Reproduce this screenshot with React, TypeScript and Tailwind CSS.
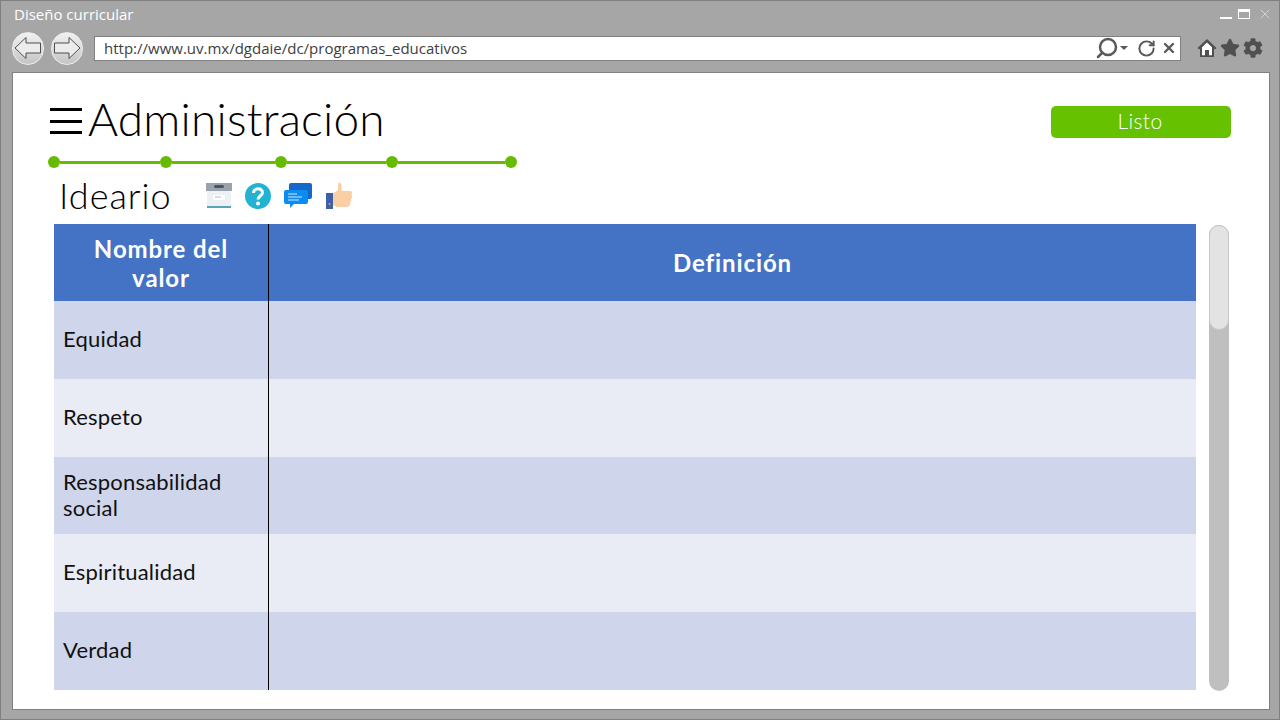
import { Search, RotateCw, X, Star } from 'lucide-react';
import { FaCog } from 'react-icons/fa';

const rows = [
  { name: ['Equidad'], height: 'h-[78px]', bg: 'bg-[#cfd5ea]' },
  { name: ['Respeto'], height: 'h-[78px]', bg: 'bg-[#e9ebf5]' },
  { name: ['Responsabilidad', 'social'], height: 'h-[77px]', bg: 'bg-[#cfd5ea]' },
  { name: ['Espiritualidad'], height: 'h-[78px]', bg: 'bg-[#e9ebf5]' },
  { name: ['Verdad'], height: 'h-[78px]', bg: 'bg-[#cfd5ea]' },
];

function NavButton({ direction }: { direction: 'left' | 'right' }) {
  return (
    <div className="flex h-[33px] w-[32px] items-center justify-center rounded-full border border-[#eeeeee] bg-gradient-to-b from-[#f2f2f2] to-[#c4c4c4]">
      <svg width="28" height="24" viewBox="0 0 28 24" fill="none" stroke="#4f4f4f" strokeWidth="1">
        {direction === 'left' ? (
          <path d="M1 12 L12 1.5 V7 H26.5 V17 H12 V22.5 Z" fill="#ececec" />
        ) : (
          <path d="M27 12 L16 1.5 V7 H1.5 V17 H16 V22.5 Z" fill="#ececec" />
        )}
      </svg>
    </div>
  );
}

function StepDot() {
  return <div className="h-[12px] w-[12px] shrink-0 rounded-full bg-[#66bb00]" />;
}

function StepLine({ width }: { width: string }) {
  return <div className={`h-[3px] bg-[#66bb00] ${width}`} />;
}

function HomeIcon() {
  return (
    <svg width="20" height="20" viewBox="0 0 20 20">
      <path d="M10 1 L19.5 10 L18 11.5 L17 10.6 V19 H3 V10.6 L2 11.5 L0.5 10 Z" fill="#505050" />
      <path d="M10 4.5 L15 9.2 V17.2 H12 V12 H8 V17.2 H5 V9.2 Z" fill="#ffffff" />
    </svg>
  );
}

function ArchiveIcon() {
  return (
    <svg width="28" height="28" viewBox="0 0 28 28">
      <rect x="1" y="1" width="26" height="8" fill="#9aa3ad" />
      <rect x="9" y="3" width="10" height="3" rx="1.5" fill="#4b5560" />
      <rect x="2" y="9" width="24" height="15" fill="#eef1f3" />
      <rect x="8" y="13" width="12" height="5" fill="#ffffff" />
      <path d="M10 15h6" stroke="#b0b8bf" strokeWidth="1" />
      <rect x="2" y="24" width="24" height="2" fill="#5ba6b5" />
    </svg>
  );
}

function HelpIcon() {
  return (
    <svg width="28" height="28" viewBox="0 0 28 28">
      <circle cx="14" cy="14" r="13" fill="#22b3d3" />
      <path d="M9.5 11 C9.5 5.5 18.5 5.5 18.5 10.5 C18.5 14 14 14 14 17.5" fill="none" stroke="#ffffff" strokeWidth="3" />
      <circle cx="14" cy="21.5" r="2" fill="#ffffff" />
    </svg>
  );
}

function ChatIcon() {
  return (
    <svg width="28" height="28" viewBox="0 0 28 28">
      <rect x="5" y="1" width="23" height="16" rx="2" fill="#1667c9" />
      <path d="M2 8h20a2 2 0 0 1 2 2v10a2 2 0 0 1-2 2H10l-4 4v-4H2a2 2 0 0 1-2-2V10a2 2 0 0 1 2-2z" fill="#0a8cf0" />
      <path d="M4 12h9M4 15h14M4 18h11" stroke="#cfe8ff" strokeWidth="1" />
    </svg>
  );
}

function ThumbIcon() {
  return (
    <svg width="28" height="28" viewBox="0 0 28 28">
      <rect x="1" y="11" width="7" height="16" fill="#3f5fa8" />
      <circle cx="4.5" cy="22" r="1" fill="#d9a441" />
      <path d="M8 12 L13 8 V2 C13 0.5 16.5 0.5 16.5 3 V9 H25 C27.5 9 27.5 12 26.5 13 C27.5 14.5 27 16 26 17 C26.5 18.5 26 20 25 20.5 C25.5 22.5 24.5 25 22 25 H12 L8 23 Z" fill="#f9cfa3" />
    </svg>
  );
}

export default function App() {
  return (
    <div className="flex h-[720px] w-[1280px] flex-col border border-[#808080] bg-[#a6a6a6] font-['Open_Sans',sans-serif]">
      {/* Title bar */}
      <div className="flex h-[26px] items-center justify-between pl-[13px] pr-[6px]">
        <span className="text-[15px] text-white">Diseño curricular</span>
        <div className="flex items-center gap-[6px]">
          <div className="mt-[8px] h-[2px] w-[12px] bg-white" />
          <div className="mr-[1px] h-[10px] w-[12px] border border-t-[3px] border-white" />
          <X className="h-[16px] w-[16px] text-[#dddddd]" strokeWidth={1.25} />
        </div>
      </div>

      {/* Toolbar */}
      <div className="flex h-[45px] items-center pb-[3px] pl-[11px] pr-[14px]">
        <div className="flex gap-[7px]">
          <NavButton direction="left" />
          <NavButton direction="right" />
        </div>
        <div className="ml-[11px] flex h-[25px] w-[1087px] items-center justify-between border border-[#808080] bg-white pl-[9px] pr-[3px]">
          <span className="text-[15px] text-[#404040]">http://www.uv.mx/dgdaie/dc/programas_educativos</span>
          <div className="flex items-center text-[#595959]">
            <Search className="h-[24px] w-[24px] -scale-x-100" strokeWidth={2.5} />
            <div className="ml-[1px] h-0 w-0 border-x-[4px] border-t-[4px] border-x-transparent border-t-[#595959]" />
            <RotateCw className="ml-[9px] h-[19px] w-[19px]" strokeWidth={2.5} />
            <X className="ml-[5px] h-[16px] w-[16px]" strokeWidth={3.5} />
          </div>
        </div>
        <div className="ml-[16px] flex items-center gap-[3px] text-[#505050]">
          <HomeIcon />
          <Star className="h-[20px] w-[20px] fill-[#505050]" />
          <FaCog className="h-[20px] w-[20px]" />
        </div>
      </div>

      {/* Page */}
      <div className="ml-[11px] flex h-[638px] w-[1258px] flex-col border border-[#808080] bg-white pl-[35px] pr-[38px] pt-[17px] font-['Lato',sans-serif]">
        <div className="flex items-start justify-between">
          <div className="flex h-[60px] items-start">
            <div className="ml-[2px] mt-[18px] flex h-[26px] w-[32px] flex-col justify-between">
              <div className="h-[3px] bg-black" />
              <div className="h-[3px] bg-black" />
              <div className="h-[3px] bg-black" />
            </div>
            <h1 className="ml-[6px] -mt-[1px] text-[46px] leading-[60px] font-light tracking-[0.2px] text-black">Administración</h1>
          </div>
          <button className="mt-[16px] h-[32px] w-[180px] rounded-[5px] bg-[#66c200] pb-[4px] pr-[2px] text-[21px] leading-[21px] font-light tracking-[0.4px] text-white">Listo</button>
        </div>

        <div className="mt-[6px] flex items-center">
          <StepDot />
          <StepLine width="w-[100px]" />
          <StepDot />
          <StepLine width="w-[103px]" />
          <StepDot />
          <StepLine width="w-[99px]" />
          <StepDot />
          <StepLine width="w-[107px]" />
          <StepDot />
        </div>

        <div className="mt-[1px] flex h-[55px] items-center pb-[1px]">
          <h2 className="ml-[11px] -mt-[3px] w-[146px] text-[36px] font-light tracking-[1px] text-black">Ideario</h2>
          <div className="flex items-center">
            <ArchiveIcon />
            <div className="ml-[11px]">
              <HelpIcon />
            </div>
            <div className="ml-[12px]">
              <ChatIcon />
            </div>
            <div className="ml-[13px]">
              <ThumbIcon />
            </div>
          </div>
        </div>

        <div className="flex items-start">
          <div className="ml-[6px] w-[1142px]">
            <div className="flex h-[77px] bg-[#4472c4] text-[24px] font-bold leading-[29px] tracking-[0.9px] text-white">
              <div className="flex w-[215px] items-center justify-center border-r border-black text-center">
                Nombre del
                <br />
                valor
              </div>
              <div className="flex flex-1 items-center justify-center">Definición</div>
            </div>
            {rows.map((row) => (
              <div key={row.name[0]} className={`flex ${row.height} ${row.bg}`}>
                <div className="flex w-[215px] items-center border-r border-black pb-[2px] pl-[9px] text-[22px] leading-[26px] tracking-[0.2px] text-[#111111]">
                  <div>
                    {row.name.map((line) => (
                      <div key={line}>{line}</div>
                    ))}
                  </div>
                </div>
              </div>
            ))}
          </div>
          <div className="ml-[13px] mt-[1px] h-[466px] w-[20px] rounded-full bg-[#bfbfbf]">
            <div className="h-[105px] rounded-full border border-[#c8c8c8] bg-[#e3e3e3]" />
          </div>
        </div>
      </div>
    </div>
  );
}
